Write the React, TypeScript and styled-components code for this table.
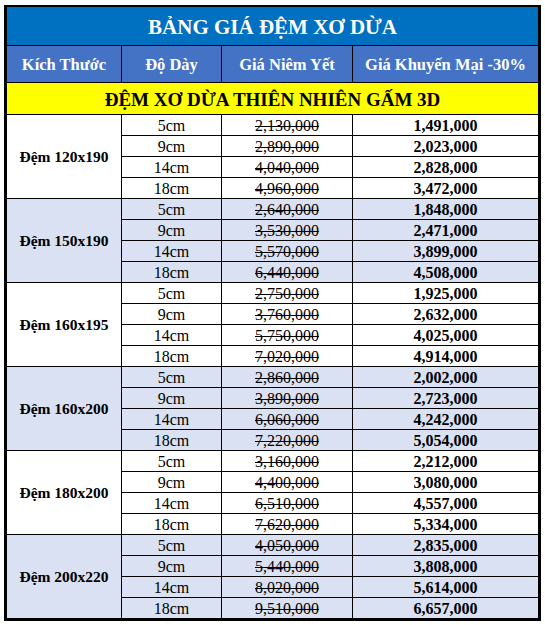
import { createGlobalStyle, styled } from 'styled-components';
import * as React from 'react';

interface IGroup {
  size: string;
  rows: { thickness: string; listed: string; promo: string }[];
}

const groups: IGroup[] = [
  {
    size: 'Đệm 120x190',
    rows: [
      { thickness: '5cm', listed: '2,130,000', promo: '1,491,000' },
      { thickness: '9cm', listed: '2,890,000', promo: '2,023,000' },
      { thickness: '14cm', listed: '4,040,000', promo: '2,828,000' },
      { thickness: '18cm', listed: '4,960,000', promo: '3,472,000' },
    ],
  },
  {
    size: 'Đệm 150x190',
    rows: [
      { thickness: '5cm', listed: '2,640,000', promo: '1,848,000' },
      { thickness: '9cm', listed: '3,530,000', promo: '2,471,000' },
      { thickness: '14cm', listed: '5,570,000', promo: '3,899,000' },
      { thickness: '18cm', listed: '6,440,000', promo: '4,508,000' },
    ],
  },
  {
    size: 'Đệm 160x195',
    rows: [
      { thickness: '5cm', listed: '2,750,000', promo: '1,925,000' },
      { thickness: '9cm', listed: '3,760,000', promo: '2,632,000' },
      { thickness: '14cm', listed: '5,750,000', promo: '4,025,000' },
      { thickness: '18cm', listed: '7,020,000', promo: '4,914,000' },
    ],
  },
  {
    size: 'Đệm 160x200',
    rows: [
      { thickness: '5cm', listed: '2,860,000', promo: '2,002,000' },
      { thickness: '9cm', listed: '3,890,000', promo: '2,723,000' },
      { thickness: '14cm', listed: '6,060,000', promo: '4,242,000' },
      { thickness: '18cm', listed: '7,220,000', promo: '5,054,000' },
    ],
  },
  {
    size: 'Đệm 180x200',
    rows: [
      { thickness: '5cm', listed: '3,160,000', promo: '2,212,000' },
      { thickness: '9cm', listed: '4,400,000', promo: '3,080,000' },
      { thickness: '14cm', listed: '6,510,000', promo: '4,557,000' },
      { thickness: '18cm', listed: '7,620,000', promo: '5,334,000' },
    ],
  },
  {
    size: 'Đệm 200x220',
    rows: [
      { thickness: '5cm', listed: '4,050,000', promo: '2,835,000' },
      { thickness: '9cm', listed: '5,440,000', promo: '3,808,000' },
      { thickness: '14cm', listed: '8,020,000', promo: '5,614,000' },
      { thickness: '18cm', listed: '9,510,000', promo: '6,657,000' },
    ],
  },
];

const App: React.FC = () => {
  return (
    <>
      <GlobalStyle />
      <Frame>
        <TitleCell>BẢNG GIÁ ĐỆM XƠ DỪA</TitleCell>
        <HeadCell>Kích Thước</HeadCell>
        <HeadCell>Độ Dày</HeadCell>
        <HeadCell>Giá Niêm Yết</HeadCell>
        <HeadCell>Giá Khuyến Mại -30%</HeadCell>
        <BannerCell>ĐỆM XƠ DỪA THIÊN NHIÊN GẤM 3D</BannerCell>
        {groups.map((group, gi) => {
          const shaded = gi % 2 === 1;
          return (
            <React.Fragment key={group.size}>
              <SizeCell $shaded={shaded}>{group.size}</SizeCell>
              {group.rows.map((row) => (
                <React.Fragment key={row.thickness}>
                  <Cell $shaded={shaded}>{row.thickness}</Cell>
                  <Cell $shaded={shaded}>
                    <Struck>{row.listed}</Struck>
                  </Cell>
                  <PromoCell $shaded={shaded}>{row.promo}</PromoCell>
                </React.Fragment>
              ))}
            </React.Fragment>
          );
        })}
      </Frame>
    </>
  );
};

const GlobalStyle = createGlobalStyle`
  html, body {
    margin: 0;
    padding: 0;
    background: #ffffff;
  }
  body {
    font-family: "Liberation Serif", "Times New Roman", serif;
  }
`;

const Frame = styled.div`
  margin: 5px 0 0 4px;
  width: 531px;
  display: grid;
  grid-template-columns: 114px 99px 130px 185px;
  grid-template-rows: 38px 36px 31px repeat(24, 20px);
  gap: 1px;
  background: #000;
  border: 3px solid #000;
  border-top-width: 2px;
`;

const BaseCell = styled.div`
  display: flex;
  align-items: center;
  justify-content: center;
  white-space: nowrap;
  color: #000;
`;

const TitleCell = styled(BaseCell)`
  grid-column: 1 / -1;
  background: #0070c0;
  color: #fff;
  font: normal 700 21px / 1 "Liberation Serif", serif;
  padding-top: 2px;
`;

const HeadCell = styled(BaseCell)`
  background: #4472c4;
  color: #fff;
  font: normal 700 16.5px / 1 "Liberation Serif", serif;
  padding-top: 2px;
`;

const BannerCell = styled(BaseCell)`
  grid-column: 1 / -1;
  background: #ffff00;
  font: normal 700 19px / 1 "Liberation Serif", serif;
  padding-top: 2px;
`;

const SizeCell = styled(BaseCell)<{ $shaded: boolean }>`
  grid-row: span 4;
  background: ${(p) => (p.$shaded ? '#d9e1f2' : '#ffffff')};
  font: normal 700 15.5px / 1 "Liberation Serif", serif;
`;

const Cell = styled(BaseCell)<{ $shaded: boolean }>`
  background: ${(p) => (p.$shaded ? '#d9e1f2' : '#ffffff')};
  font: normal 400 16px / 1 "Liberation Serif", serif;
  padding-top: 1px;
`;

const PromoCell = styled(Cell)`
  font-weight: 700;
`;

const Struck = styled.span`
  text-decoration: line-through;
`;

export default App;
